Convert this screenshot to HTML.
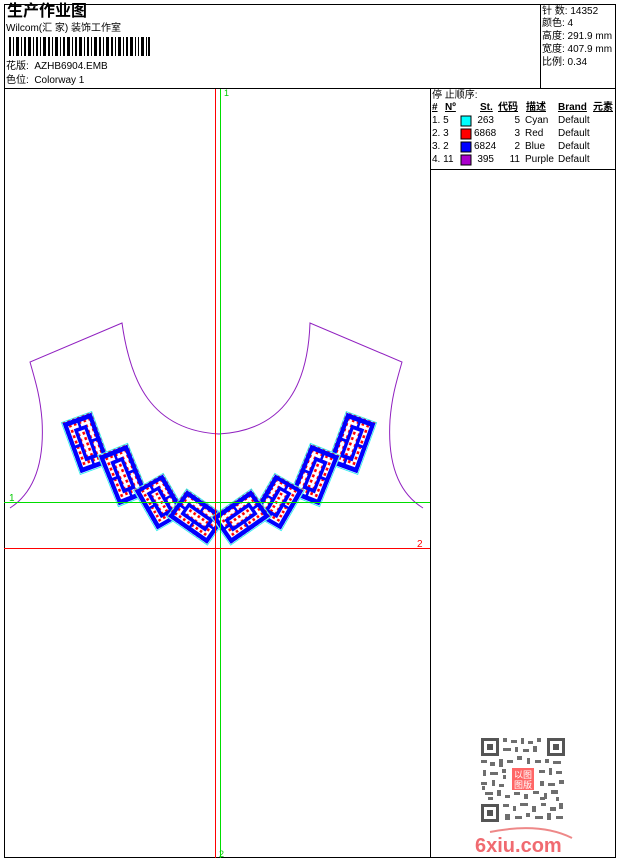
<!DOCTYPE html>
<html><head><meta charset="utf-8"><style>
body{margin:0;width:620px;height:860px;background:#fff;position:relative;font-family:"Liberation Sans","Noto Sans CJK SC",sans-serif;font-size:10px;color:#000;overflow:hidden}
.a{position:absolute;white-space:nowrap;line-height:12px}
.b{font-weight:bold;text-decoration:underline}
</style></head><body>
<svg width="620" height="860" style="position:absolute;left:0;top:0">
<rect x="4.5" y="4.5" width="611" height="853" fill="none" stroke="#000"/>
<line x1="4" y1="88.5" x2="616" y2="88.5" stroke="#000"/>
<line x1="540.5" y1="4" x2="540.5" y2="88" stroke="#000"/>
<line x1="430.5" y1="88" x2="430.5" y2="858" stroke="#000"/>
<line x1="430" y1="169.5" x2="616" y2="169.5" stroke="#000"/>
<g fill="#000">
<rect x="9" y="37" width="2" height="19"/><rect x="13" y="37" width="1" height="19"/><rect x="16" y="37" width="3" height="19"/><rect x="21" y="37" width="1" height="19"/><rect x="24" y="37" width="2" height="19"/><rect x="28" y="37" width="3" height="19"/><rect x="33" y="37" width="1" height="19"/><rect x="36" y="37" width="2" height="19"/><rect x="40" y="37" width="1" height="19"/><rect x="43" y="37" width="3" height="19"/><rect x="48" y="37" width="2" height="19"/><rect x="52" y="37" width="1" height="19"/><rect x="55" y="37" width="3" height="19"/><rect x="60" y="37" width="1" height="19"/><rect x="63" y="37" width="2" height="19"/><rect x="67" y="37" width="3" height="19"/><rect x="72" y="37" width="1" height="19"/><rect x="75" y="37" width="2" height="19"/><rect x="79" y="37" width="3" height="19"/><rect x="84" y="37" width="1" height="19"/><rect x="87" y="37" width="2" height="19"/><rect x="91" y="37" width="1" height="19"/><rect x="94" y="37" width="3" height="19"/><rect x="99" y="37" width="2" height="19"/><rect x="103" y="37" width="1" height="19"/><rect x="106" y="37" width="3" height="19"/><rect x="111" y="37" width="2" height="19"/><rect x="115" y="37" width="1" height="19"/><rect x="118" y="37" width="3" height="19"/><rect x="123" y="37" width="1" height="19"/><rect x="126" y="37" width="2" height="19"/><rect x="130" y="37" width="3" height="19"/><rect x="135" y="37" width="1" height="19"/><rect x="138" y="37" width="1" height="19"/><rect x="141" y="37" width="3" height="19"/><rect x="146" y="37" width="1" height="19"/><rect x="148" y="37" width="2" height="19"/>
</g>
<line x1="215.5" y1="89" x2="215.5" y2="858" stroke="#f00"/>
<g fill="none" stroke="#9020c0" stroke-width="1">
<path d="M10,508 C30,495 45,470 42,420 C40,395 35,380 30,362 L122,323 C130,380 150,430 219,434 C288,430 308,380 310,323 L402,362 C397,380 392,395 390,420 C387,470 402,495 423,508"/>
</g>
<defs>
<pattern id="dots" width="6" height="6" patternUnits="userSpaceOnUse"><rect width="6" height="6" fill="#fff"/><rect width="3" height="3" fill="#f00"/></pattern>
<g id="m">
<rect x="-19" y="-29" width="38" height="58" fill="url(#dots)" stroke="#3ee" stroke-width="1"/>
<rect x="-15.5" y="-25.5" width="31" height="51" fill="none" stroke="#00f" stroke-width="5"/>
<rect x="-6" y="-16" width="12" height="32" fill="none" stroke="#00f" stroke-width="4"/>
<line x1="-15" y1="0" x2="-6" y2="0" stroke="#00f" stroke-width="3"/>
<line x1="6" y1="0" x2="15" y2="0" stroke="#00f" stroke-width="3"/>
<line x1="0" y1="-25" x2="0" y2="-16" stroke="#00f" stroke-width="3"/>
<line x1="0" y1="25" x2="0" y2="16" stroke="#00f" stroke-width="3"/>
</g>
<g id="half">
<use href="#m" transform="translate(86,443) rotate(-20) scale(0.85,0.95)"/>
<use href="#m" transform="translate(123,475) rotate(-22) scale(0.85,0.95)"/>
<use href="#m" transform="translate(160,502) rotate(-30) scale(0.9,0.8)"/>
<use href="#m" transform="translate(197,517) rotate(-55) scale(0.9,0.85)"/>
</g>
</defs>
<use href="#half"/>
<use href="#half" transform="translate(438,0) scale(-1,1)"/>
<line x1="215.5" y1="89" x2="215.5" y2="858" stroke="#f00"/>
<line x1="220.5" y1="89" x2="220.5" y2="858" stroke="#0d0"/>
<line x1="4" y1="502.5" x2="430" y2="502.5" stroke="#0d0"/>
<line x1="4" y1="548.5" x2="430" y2="548.5" stroke="#f00"/>
<text x="9" y="501" fill="#0c0" font-size="10" font-family="Liberation Sans">1</text>
<text x="224" y="96" fill="#0c0" font-size="9" font-family="Liberation Sans">1</text>
<text x="417" y="547" fill="#f00" font-size="10" font-family="Liberation Sans">2</text>
<text x="219" y="857" fill="#0c0" font-size="9" font-family="Liberation Sans">2</text>
<rect x="461" y="116" width="10" height="10" fill="#0ff" stroke="#000"/>
<rect x="461" y="129" width="10" height="10" fill="#f00" stroke="#000"/>
<rect x="461" y="142" width="10" height="10" fill="#00f" stroke="#000"/>
<rect x="461" y="155" width="10" height="10" fill="#a0c" stroke="#000"/>
<g fill="#555">
<rect x="481" y="738" width="18" height="18"/><rect x="484" y="741" width="12" height="12" fill="#fff"/><rect x="487" y="744" width="6" height="6"/>
<rect x="547" y="738" width="18" height="18"/><rect x="550" y="741" width="12" height="12" fill="#fff"/><rect x="553" y="744" width="6" height="6"/>
<rect x="481" y="804" width="18" height="18"/><rect x="484" y="807" width="12" height="12" fill="#fff"/><rect x="487" y="810" width="6" height="6"/>
</g>
<g fill="#555" opacity="0.85">
<path d="M503 738h4v4h-4zM511 740h6v3h-6zM521 738h3v6h-3zM528 741h5v3h-5zM537 738h4v4h-4zM503 748h8v3h-8zM515 747h3v5h-3zM523 749h6v3h-6zM533 746h4v6h-4zM481 760h6v3h-6zM490 762h5v4h-5zM499 759h4v8h-4zM507 760h6v3h-6zM517 756h5v4h-5zM527 758h3v6h-3zM535 760h6v3h-6zM545 759h4v4h-4zM553 761h8v3h-8zM483 770h3v6h-3zM490 772h8v3h-8zM502 769h4v4h-4zM539 770h6v3h-6zM549 768h3v7h-3zM556 771h6v3h-6zM481 782h6v3h-6zM492 780h3v6h-3zM499 784h5v3h-5zM540 781h4v5h-4zM548 783h7v3h-7zM559 780h5v4h-5zM485 792h8v3h-8zM497 790h4v6h-4zM505 795h5v3h-5zM514 792h6v3h-6zM524 794h4v5h-4zM533 791h6v3h-6zM544 793h3v6h-3zM551 790h7v4h-7zM503 804h6v3h-6zM513 806h3v5h-3zM520 803h8v3h-8zM532 806h4v6h-4zM541 803h5v3h-5zM550 807h6v4h-6zM559 803h4v6h-4zM505 814h5v6h-5zM515 816h7v3h-7zM526 813h4v4h-4zM535 816h8v3h-8zM547 813h4v7h-4zM556 816h7v3h-7zM482 786h3v4h-3zM488 797h5v3h-5zM503 775h3v4h-3zM540 797h5v3h-5zM556 797h3v4h-3z"/>
</g>
<rect x="511" y="767" width="24" height="24" fill="#fff"/>
<rect x="512" y="768" width="22" height="22" fill="#f66"/>
<text x="514" y="778" fill="#fff" font-size="9" font-family="Noto Sans CJK SC">以</text><text x="523" y="778" fill="#fff" font-size="9" font-family="Noto Sans CJK SC">图</text>
<text x="514" y="788" fill="#fff" font-size="9" font-family="Noto Sans CJK SC">图</text><text x="523" y="788" fill="#fff" font-size="9" font-family="Noto Sans CJK SC">版</text>
<path d="M490,832 Q540,822 572,838" fill="none" stroke="#e88" stroke-width="2"/>
<text x="475" y="852" fill="#f06a70" font-size="20" font-weight="bold" font-family="Liberation Sans">6xiu.com</text>
</svg>
<div class="a" style="left:7px;top:3px;font-size:16px;line-height:18px;font-weight:bold">生产作业图</div>
<div class="a" style="left:6px;top:23px">Wilcom(汇 家) 装饰工作室</div>
<div class="a" style="left:6px;top:61px">花版:&nbsp; AZHB6904.EMB</div>
<div class="a" style="left:6px;top:75px">色位:&nbsp; Colorway 1</div>
<div class="a" style="left:542px;top:6px">针 数: 14352</div>
<div class="a" style="left:542px;top:18px">颜色: 4</div>
<div class="a" style="left:542px;top:31px">高度: 291.9 mm</div>
<div class="a" style="left:542px;top:44px">宽度: 407.9 mm</div>
<div class="a" style="left:542px;top:57px">比例: 0.34</div>
<div class="a" style="left:432px;top:90px">停 止顺序:</div>
<div class="a b" style="left:432px;top:102px">#</div>
<div class="a b" style="left:445px;top:102px">Nº</div>
<div class="a b" style="left:480px;top:102px">St.</div>
<div class="a b" style="left:498px;top:102px">代码</div>
<div class="a b" style="left:526px;top:102px">描述</div>
<div class="a b" style="left:558px;top:102px">Brand</div>
<div class="a b" style="left:593px;top:102px">元素</div>
<div class="a" style="left:432px;top:115px">1. 5</div><div class="a" style="left:432px;top:128px">2. 3</div><div class="a" style="left:432px;top:141px">3. 2</div><div class="a" style="left:432px;top:154px">4. 11</div>
<div class="a" style="left:474px;top:115px;width:20px;text-align:right">263</div><div class="a" style="left:474px;top:128px">6868</div><div class="a" style="left:474px;top:141px">6824</div><div class="a" style="left:474px;top:154px;width:20px;text-align:right">395</div>
<div class="a" style="left:500px;top:115px;width:20px;text-align:right">5</div><div class="a" style="left:500px;top:128px;width:20px;text-align:right">3</div><div class="a" style="left:500px;top:141px;width:20px;text-align:right">2</div><div class="a" style="left:500px;top:154px;width:20px;text-align:right">11</div>
<div class="a" style="left:525px;top:115px">Cyan</div><div class="a" style="left:525px;top:128px">Red</div><div class="a" style="left:525px;top:141px">Blue</div><div class="a" style="left:525px;top:154px">Purple</div>
<div class="a" style="left:558px;top:115px">Default</div><div class="a" style="left:558px;top:128px">Default</div><div class="a" style="left:558px;top:141px">Default</div><div class="a" style="left:558px;top:154px">Default</div>
</body></html>
